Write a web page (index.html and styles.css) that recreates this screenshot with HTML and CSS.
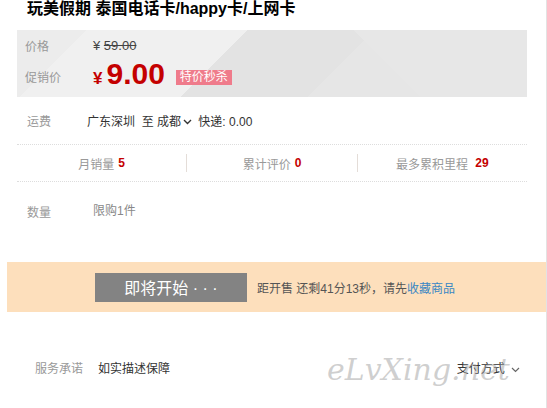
FILE: index.html
```html
<!DOCTYPE html>
<html lang="zh-CN">
<head>
    <meta charset="UTF-8">
    <meta name="viewport" content="width=device-width, initial-scale=1.0">
    <title>玩美假期 泰国电话卡</title>
    <link rel="stylesheet" href="styles.css">
</head>
<body>
    <div class="page">
        <h1 class="title">玩美假期 泰国电话卡/happy卡/上网卡</h1>

        <div class="price-box">
            <div class="price-row">
                <span class="label">价格</span>
                <span class="old-price">¥ <s>59.00</s></span>
            </div>
            <div class="price-row promo">
                <span class="label">促销价</span>
                <span class="new-price"><em>¥</em>9.00</span>
                <span class="tag">特价秒杀</span>
            </div>
        </div>

        <div class="freight">
            <span class="label">运费</span>
            <span class="freight-value">广东深圳&nbsp; 至 成都<svg class="chev" width="9" height="6" viewBox="0 0 9 6"><path d="M1 1l3.5 3.5L8 1" fill="none" stroke="#333" stroke-width="1.4"/></svg> 快递: 0.00</span>
        </div>

        <div class="stats">
            <div class="stat">月销量 <b>5</b></div>
            <div class="stat">累计评价 <b>0</b></div>
            <div class="stat">最多累积里程&nbsp; <b>29</b></div>
        </div>

        <div class="amount">
            <span class="label">数量</span>
            <span class="limit">限购1件</span>
        </div>

        <div class="buy-bar">
            <button class="start-btn">即将开始 · · ·</button>
            <span class="countdown">距开售 还剩41分13秒，请先<a href="#">收藏商品</a></span>
        </div>

        <div class="service">
            <span class="label">服务承诺</span>
            <span class="promise">如实描述保障</span>
            <span class="pay">支付方式 <svg width="9" height="6" viewBox="0 0 9 6"><path d="M1 1l3.5 3.5L8 1" fill="none" stroke="#666" stroke-width="1.2"/></svg></span>
        </div>

        <div class="watermark">eLvXing.net</div>
    </div>
</body>
</html>
```

FILE: styles.css
```css
* {
    margin: 0;
    padding: 0;
    box-sizing: border-box;
}

body {
    font-family: "Liberation Sans", "Noto Sans CJK SC", sans-serif;
    font-size: 12px;
    color: #333;
    background: #fff;
}

.page {
    position: relative;
    width: 547px;
    height: 408px;
    border-right: 1px solid #e3e3e3;
}

.title {
    font-size: 16px;
    line-height: 18px;
    font-weight: bold;
    color: #000;
    padding-left: 27px;
}

.label {
    color: #999;
}

.price-box {
    margin: 12px 0 0 17px;
    width: 510px;
    height: 67px;
    padding: 7px 8px 0;
    background:
        linear-gradient(45deg, transparent 0 70%, #e7e7e7 70% 100%),
        linear-gradient(135deg, #ececec 0 12%, #f0f0f0 12% 40%, #e3e3e3 40% 62%, #e6e6e6 62%);
}

.price-row {
    display: flex;
    align-items: center;
    height: 16px;
}

.price-row .label {
    width: 68px;
}

.old-price {
    font-size: 13px;
    color: #444;
}

.old-price s {
    text-decoration: line-through;
}

.price-row.promo {
    height: 30px;
    margin-top: 8px;
}

.new-price {
    color: #c40000;
    font-size: 30px;
    font-weight: bold;
    line-height: 30px;
}

.new-price em {
    font-style: normal;
    font-size: 17px;
    margin-right: 4px;
}

.tag {
    margin-left: 11px;
    margin-top: 2px;
    background: #ef7b8b;
    color: #fff;
    font-size: 12px;
    line-height: 15px;
    padding: 0 4px;
}

.freight {
    display: flex;
    align-items: center;
    height: 47px;
    padding-left: 27px;
}

.freight .label {
    width: 60px;
}

.chev {
    margin: 0 3px 1px 2px;
}

.stats {
    display: flex;
    margin-left: 17px;
    width: 510px;
    height: 38px;
    border-top: 1px dotted #ddd;
    border-bottom: 1px dotted #ddd;
}

.stat {
    flex: 1;
    display: flex;
    align-items: center;
    justify-content: center;
    color: #999;
}

.stat + .stat {
    border-left: 1px solid #e4ddd8;
    margin: 9px 0;
}

.stat b {
    color: #c40000;
    margin-left: 4px;
}

.amount {
    display: flex;
    align-items: flex-start;
    height: 80px;
    padding: 19px 0 0 27px;
}

.amount .label {
    width: 66px;
    margin-top: 2px;
}

.limit {
    color: #888;
}

.buy-bar {
    display: flex;
    align-items: center;
    margin-left: 7px;
    width: 539px;
    height: 50px;
    background: #fddfbc;
    padding-left: 88px;
}

.start-btn {
    width: 152px;
    height: 29px;
    border: none;
    background: #838383;
    color: #fff;
    font-family: inherit;
    font-size: 16px;
    margin-right: 10px;
}

.countdown {
    color: #555;
}

.countdown a {
    color: #3a87c4;
    text-decoration: none;
}

.service {
    display: flex;
    align-items: center;
    height: 110px;
    padding: 0 0 0 35px;
}

.service .label {
    width: 63px;
}

.pay {
    margin-left: auto;
    margin-right: 26px;
}

.pay svg {
    margin-left: 3px;
}

.watermark {
    position: absolute;
    left: 327px;
    top: 352px;
    font-family: "DejaVu Serif", serif;
    font-style: italic;
    font-size: 30px;
    color: rgba(160, 160, 160, 0.5);
    pointer-events: none;
}
```
